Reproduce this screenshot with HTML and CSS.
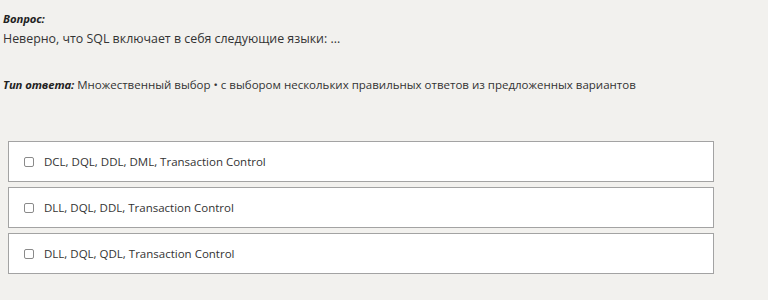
FILE: index.html
```html
<!DOCTYPE html>
<html lang="ru">
<head>
<meta charset="utf-8">
<link rel="stylesheet" href="styles.css">
</head>
<body>
<div class="page">
  <div class="question">
    <div class="label">Вопрос:</div>
    <div class="text">Неверно, что SQL включает в себя следующие языки: ...</div>
  </div>
  <div class="type"><span class="label">Тип ответа:</span> Множественный выбор • с выбором нескольких правильных ответов из предложенных вариантов</div>
  <div class="options">
    <label class="option"><span class="box"></span><span>DCL, DQL, DDL, DML, Transaction Control</span></label>
    <label class="option"><span class="box"></span><span>DLL, DQL, DDL, Transaction Control</span></label>
    <label class="option"><span class="box"></span><span>DLL, DQL, QDL, Transaction Control</span></label>
  </div>
</div>
</body>
</html>
```
FILE: styles.css
```css
html, body {
  margin: 0;
  background: #f2f1ee;
}
body {
  font-family: "Open Sans", "Noto Sans", sans-serif;
  font-size: 11.5px;
  color: #333;
}
.page {
  padding: 11px 0 0 3px;
}
.label {
  font-weight: 700;
  font-style: italic;
  font-size: 11.3px;
  color: #222;
  letter-spacing: -0.1px;
}
.question .label {
  line-height: 16px;
}
.question .text {
  font-size: 12.4px;
  line-height: 18px;
  margin-top: 3px;
}
.type {
  margin-top: 28px;
  line-height: 18px;
}
.options {
  margin: 47px 0 0 5px;
  width: 706px;
  display: flex;
  flex-direction: column;
  gap: 5px;
}
.option {
  display: flex;
  align-items: center;
  height: 39px;
  border: 1px solid #a3a3a3;
  background: #fff;
  padding-left: 15px;
  color: #333;
}
.box {
  width: 8px;
  height: 8px;
  border: 1px solid #8a8a8a;
  border-radius: 2px;
  margin-right: 10px;
  background: #fff;
}
```
